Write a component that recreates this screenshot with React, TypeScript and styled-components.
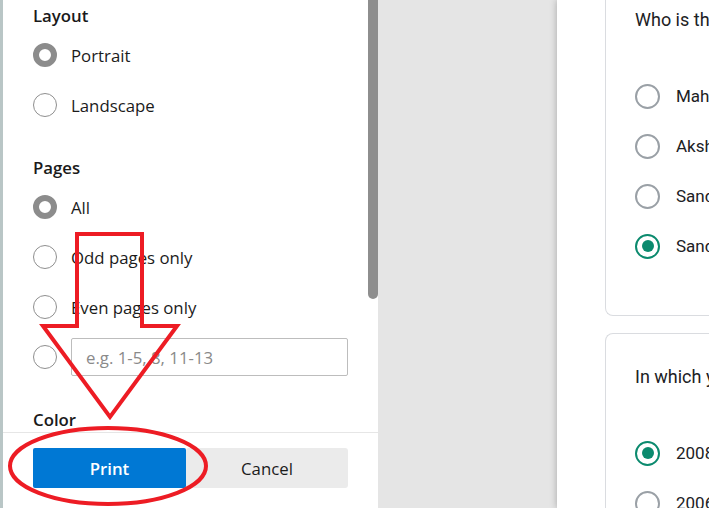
import React from "react";
import styled, { createGlobalStyle } from "styled-components";

const Global = createGlobalStyle`
  html, body { margin: 0; padding: 0; width: 709px; height: 508px; overflow: hidden; background: #fff; }
  #root { width: 709px; height: 508px; }
  * { box-sizing: border-box; }
`;

const Screen = styled.div`
  position: relative;
  display: flex;
  width: 709px;
  height: 508px;
  overflow: hidden;
  font-family: "Open Sans", "Noto Sans", sans-serif;
`;

const EdgeStrip = styled.div`
  width: 3px;
  flex: none;
  background: #b9c6c6;
`;

const Sidebar = styled.aside`
  width: 375px;
  flex: none;
  display: flex;
  flex-direction: column;
  background: #fff;
`;

const ScrollArea = styled.div`
  height: 432px;
  display: flex;
  overflow: hidden;
`;

const Content = styled.div`
  flex: 1;
  padding: 5px 20px 0 30px;
  display: flex;
  flex-direction: column;
  gap: 27px;
`;

const ScrollTrack = styled.div`
  width: 10px;
  flex: none;
`;

const Thumb = styled.div`
  height: 299px;
  background: #8e8e8e;
  border-radius: 0 0 5px 5px;
`;

const Section = styled.section`
  display: flex;
  flex-direction: column;
`;

const Heading = styled.h3`
  margin: 0 0 3px;
  font-size: 16.8px;
  line-height: 22px;
  font-weight: 600;
  color: #1a1a1a;
`;

const Row = styled.label`
  height: 50px;
  display: flex;
  align-items: center;
  gap: 14px;
  font-size: 16.8px;
  color: #1b1b1b;
`;

const Radio = styled.span<{ $checked?: boolean }>`
  width: 24px;
  height: 24px;
  flex: none;
  border-radius: 50%;
  background: #fff;
  border: ${(p) => (p.$checked ? "6px solid #8c8c8c" : "1px solid #8f8f8f")};
`;

const RangeInput = styled.input`
  flex: 1;
  height: 38px;
  border: 1px solid #bdbdbd;
  border-radius: 2px;
  padding: 0 14px;
  font-family: "Open Sans", "Noto Sans", sans-serif;
  font-size: 16.8px;
  color: #1b1b1b;
  outline: none;
  &::placeholder { color: #8a8a8a; }
`;

const Footer = styled.div`
  flex: 1;
  border-top: 1px solid #e6e6e6;
  padding: 15px 30px 0 30px;
`;

const Buttons = styled.div`
  display: grid;
  grid-template-columns: 153px 162px;
`;

const Button = styled.button<{ $primary?: boolean }>`
  height: 40px;
  border: none;
  border-radius: ${(p) => (p.$primary ? "2px" : "3px")};
  background: ${(p) => (p.$primary ? "#0078d4" : "#ebebeb")};
  color: ${(p) => (p.$primary ? "#fff" : "#1b1b1b")};
  font-family: "Open Sans", "Noto Sans", sans-serif;
  font-size: 16.8px;
  font-weight: ${(p) => (p.$primary ? 600 : 400)};
`;

const Preview = styled.div`
  flex: 1;
  display: flex;
  background: #e5e5e5;
  padding-left: 179px;
`;

const Page = styled.div`
  flex: 1;
  background: #fff;
  box-shadow: 0 0 7px rgba(0, 0, 0, 0.28);
  padding-left: 48px;
  display: flex;
  flex-direction: column;
  gap: 17px;
  font-family: Roboto, "Noto Sans", sans-serif;
  color: #202124;
  overflow: hidden;
`;

const Card = styled.div<{ $first?: boolean }>`
  border: 1px solid #dadce0;
  border-right: none;
  border-top: ${(p) => (p.$first ? "none" : "1px solid #dadce0")};
  border-radius: ${(p) => (p.$first ? "0 0 0 8px" : "8px 0 0 0")};
  padding: ${(p) => (p.$first ? "8px 0 44px 29px" : "31px 0 0 29px")};
  white-space: nowrap;
`;

const Question = styled.div`
  font-size: 18px;
  line-height: 24px;
  margin-bottom: 39px;
`;

const Option = styled.div`
  height: 50px;
  display: flex;
  align-items: center;
  gap: 16px;
  font-size: 17px;
`;

const FormRadio = styled.span<{ $checked?: boolean }>`
  width: 25px;
  height: 25px;
  flex: none;
  border-radius: 50%;
  border: 2.5px solid ${(p) => (p.$checked ? "#0b8a6e" : "#9aa0a6")};
  display: flex;
  align-items: center;
  justify-content: center;
  &::after {
    content: "";
    display: ${(p) => (p.$checked ? "block" : "none")};
    width: 12px;
    height: 12px;
    border-radius: 50%;
    background: #0b8a6e;
  }
`;

const Annotation = styled.svg`
  position: absolute;
  left: 0;
  top: 0;
  pointer-events: none;
`;

export default function App() {
  return (
    <>
      <Global />
      <Screen>
        <EdgeStrip />
        <Sidebar>
          <ScrollArea>
            <Content>
              <Section>
                <Heading>Layout</Heading>
                <Row><Radio $checked />Portrait</Row>
                <Row><Radio />Landscape</Row>
              </Section>
              <Section>
                <Heading>Pages</Heading>
                <Row><Radio $checked />All</Row>
                <Row><Radio />Odd pages only</Row>
                <Row><Radio />Even pages only</Row>
                <Row><Radio /><RangeInput placeholder="e.g. 1-5, 8, 11-13" /></Row>
              </Section>
              <Section>
                <Heading>Color</Heading>
              </Section>
            </Content>
            <ScrollTrack><Thumb /></ScrollTrack>
          </ScrollArea>
          <Footer>
            <Buttons>
              <Button $primary>Print</Button>
              <Button>Cancel</Button>
            </Buttons>
          </Footer>
        </Sidebar>
        <Preview>
          <Page>
            <Card $first>
              <Question>Who is the captain of the team?</Question>
              <Option><FormRadio />Mahendra Singh Dhoni</Option>
              <Option><FormRadio />Akshay Kumar</Option>
              <Option><FormRadio />Sandeep Patil</Option>
              <Option><FormRadio $checked />Sandeep Sharma</Option>
            </Card>
            <Card>
              <Question>In which year was it held?</Question>
              <Option><FormRadio $checked />2008</Option>
              <Option><FormRadio />2006</Option>
            </Card>
          </Page>
        </Preview>
        <Annotation width="709" height="508" viewBox="0 0 709 508">
          <path
            d="M77 234 L142 234 L142 326 L177 326 L110 417 L43 326 L77 326 Z"
            fill="none"
            stroke="#ed1c24"
            strokeWidth="4"
            strokeLinejoin="miter"
          />
          <ellipse cx="108" cy="466" rx="98" ry="38" fill="none" stroke="#ed1c24" strokeWidth="4" />
        </Annotation>
      </Screen>
    </>
  );
}
